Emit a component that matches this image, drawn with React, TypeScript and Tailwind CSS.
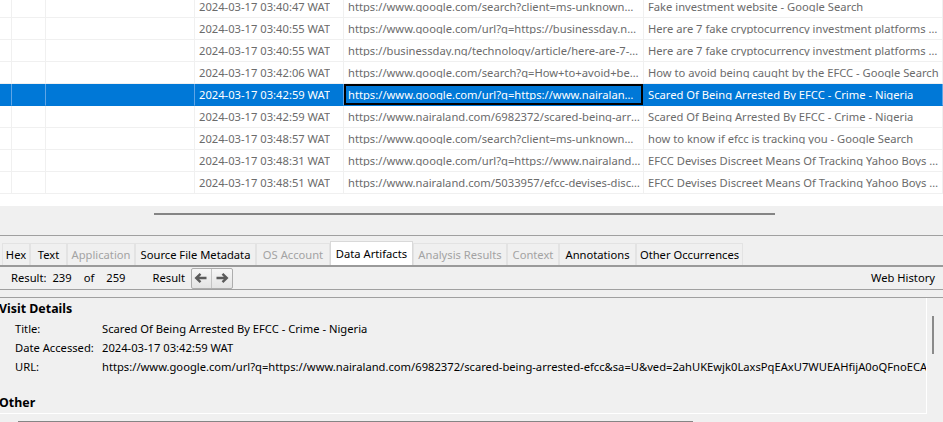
import React from "react";

type Row = { date: string; url: string; title: string };

const ROWS: Row[] = [
  {
    date: "2024-03-17 03:40:47 WAT",
    url: "https://www.google.com/search?client=ms-unknown&q=Fake+investment+website",
    title: "Fake investment website - Google Search",
  },
  {
    date: "2024-03-17 03:40:55 WAT",
    url: "https://www.google.com/url?q=https://businessday.ng/technology/article/here-are-7",
    title: "Here are 7 fake cryptocurrency investment platforms operating in Nigeria",
  },
  {
    date: "2024-03-17 03:40:55 WAT",
    url: "https://businessday.ng/technology/article/here-are-7-fake-cryptocurrency",
    title: "Here are 7 fake cryptocurrency investment platforms operating in Nigeria",
  },
  {
    date: "2024-03-17 03:42:06 WAT",
    url: "https://www.google.com/search?q=How+to+avoid+being+caught+by+the+EFCC",
    title: "How to avoid being caught by the EFCC - Google Search",
  },
  {
    date: "2024-03-17 03:42:59 WAT",
    url: "https://www.google.com/url?q=https://www.nairaland.com/6982372/scared-being-arrested-efcc",
    title: "Scared Of Being Arrested By EFCC - Crime - Nigeria",
  },
  {
    date: "2024-03-17 03:42:59 WAT",
    url: "https://www.nairaland.com/6982372/scared-being-arrested-efcc",
    title: "Scared Of Being Arrested By EFCC - Crime - Nigeria",
  },
  {
    date: "2024-03-17 03:48:57 WAT",
    url: "https://www.google.com/search?client=ms-unknown&q=how+to+know+if+efcc",
    title: "how to know if efcc is tracking you - Google Search",
  },
  {
    date: "2024-03-17 03:48:31 WAT",
    url: "https://www.google.com/url?q=https://www.nairaland.com/5033957/efcc-devises",
    title: "EFCC Devises Discreet Means Of Tracking Yahoo Boys - Crime - Nigeria",
  },
  {
    date: "2024-03-17 03:48:51 WAT",
    url: "https://www.nairaland.com/5033957/efcc-devises-discreet-means-tracking",
    title: "EFCC Devises Discreet Means Of Tracking Yahoo Boys - Crime - Nigeria",
  },
];

const TABS: { label: string; w: string; disabled?: boolean; active?: boolean }[] = [
  { label: "Hex", w: "w-[28px]" },
  { label: "Text", w: "w-[37px]" },
  { label: "Application", w: "w-[68px]", disabled: true },
  { label: "Source File Metadata", w: "w-[121px]" },
  { label: "OS Account", w: "w-[74px]", disabled: true },
  { label: "Data Artifacts", w: "w-[83px]", active: true },
  { label: "Analysis Results", w: "w-[94px]", disabled: true },
  { label: "Context", w: "w-[52px]", disabled: true },
  { label: "Annotations", w: "w-[77px]" },
  { label: "Other Occurrences", w: "w-[107px]" },
];

function TableRow({ row, selected }: { row: Row; selected: boolean }) {
  const cell = selected
    ? "h-[22px] min-w-0 border-r border-b border-r-[#5fa5e6] border-b-[#0078d7] bg-[#0078d7] text-white"
    : "h-[22px] min-w-0 border-r border-b border-[#f0f0f0] text-[#6b6b6b]";
  return (
    <div className="grid grid-cols-[12px_34px_149px_149px_300px_minmax(0,1fr)]">
      <div className={cell} />
      <div className={cell} />
      <div className={cell} />
      <div className={`${cell} flex items-center pl-[4px]`}>
        <span className="truncate">{row.date}</span>
      </div>
      {selected ? (
        <div className="flex h-[22px] min-w-0 items-center border-b border-b-[#0078d7] bg-[#0078d7] pr-[1px]">
          <div className="flex h-[21px] w-full min-w-0 items-center border-2 border-black pl-[2px] pr-[2px] text-white">
            <span className="truncate">{row.url}</span>
          </div>
        </div>
      ) : (
        <div className={`${cell} flex items-center pl-[4px] pr-[2px]`}>
          <span className="truncate">{row.url}</span>
        </div>
      )}
      <div className={`${cell} flex items-center pl-[4px] pr-[2px]`}>
        <span className="truncate">{row.title}</span>
      </div>
    </div>
  );
}

function NavButtons() {
  return (
    <div className="ml-[6px] flex h-[21px] items-stretch rounded-[2px] border border-[#adadad] bg-gradient-to-b from-[#f6f6f6] to-[#e4e4e4]">
      <div className="flex w-[20px] items-center justify-center border-r border-[#c4c4c4]">
        <svg width="14" height="12" viewBox="0 0 14 12">
          <path d="M12.5 6H2.5M6.5 1.8 2.2 6l4.3 4.2" fill="none" stroke="#5b5b5b" strokeWidth="2.4" />
        </svg>
      </div>
      <div className="flex w-[20px] items-center justify-center">
        <svg width="14" height="12" viewBox="0 0 14 12">
          <path d="M1.5 6h10M7.5 1.8 11.8 6l-4.3 4.2" fill="none" stroke="#5b5b5b" strokeWidth="2.4" />
        </svg>
      </div>
    </div>
  );
}

export default function App() {
  return (
    <div className="h-[422px] w-[943px] overflow-hidden bg-[#f0f0f0] font-['Noto_Sans','Segoe_UI',sans-serif] text-[11.2px] leading-none text-black">
      {/* results table */}
      <div className="h-[206px] overflow-hidden bg-white">
        <div className="-mt-[4px]">
          {ROWS.map((row, i) => (
            <TableRow key={i} row={row} selected={i === 4} />
          ))}
        </div>
      </div>

      {/* horizontal scrollbar of the table */}
      <div className="ml-[154px] mt-[7px] h-[2px] w-[621px] bg-[#858585]" />

      <div className="mt-[20px] h-px bg-[#a0a0a0]" />

      {/* viewer tabs */}
      <div className="flex h-[29px] items-end pl-[2px]">
        {TABS.map((t) => (
          <div
            key={t.label}
            className={`flex shrink-0 items-center justify-center whitespace-nowrap border border-b-0 ${t.w} ${
              t.active
                ? "h-[24px] border-[#d9d9d9] bg-white text-black"
                : "h-[22px] border-[#e3e3e3] bg-[#f0f0f0]"
            } ${t.disabled ? "text-[#a3a3a3]" : "text-black"}`}
          >
            {t.label}
          </div>
        ))}
      </div>
      <div className="h-[2px] bg-[#9a9a9a]" />

      {/* result toolbar */}
      <div className="flex h-[22px] items-center pl-[11px] pr-[8px]">
        <span>Result:</span>
        <span className="ml-[6px]">239</span>
        <span className="ml-[12px]">of</span>
        <span className="ml-[12px]">259</span>
        <span className="ml-[27px]">Result</span>
        <NavButtons />
        <span className="ml-auto">Web History</span>
      </div>
      <div className="h-px bg-[#a0a0a0]" />
      <div className="mt-[7px] h-px bg-[#a0a0a0]" />

      {/* details panel */}
      <div className="flex h-[116px]">
        <div className="h-[116px] w-[927px] min-w-0 border-b border-r border-white">
          <div className="-ml-[1px] flex h-[21px] items-center pt-[1px] text-[12.4px] font-bold">Visit Details</div>
          <div className="grid grid-cols-[87px_minmax(0,1fr)] pl-[15px]">
            {[
              ["Title:", "Scared Of Being Arrested By EFCC - Crime - Nigeria"],
              ["Date Accessed:", "2024-03-17 03:42:59 WAT"],
              [
                "URL:",
                "https://www.google.com/url?q=https://www.nairaland.com/6982372/scared-being-arrested-efcc&sa=U&ved=2ahUKEwjk0LaxsPqEAxU7WUEAHfijA0oQFnoECAYQAg",
              ],
            ].map(([k, v]) => (
              <React.Fragment key={k}>
                <div className="flex h-[19px] items-center whitespace-nowrap">{k}</div>
                <div className="flex h-[19px] min-w-0 items-center overflow-hidden whitespace-nowrap">{v}</div>
              </React.Fragment>
            ))}
          </div>
          <div className="-ml-[1px] mt-[17px] flex h-[20px] items-center text-[12.4px] font-bold">Other</div>
        </div>
        <div className="flex-1 pl-[5px] pt-[18px]">
          <div className="h-[38px] w-[2px] bg-[#8a8a8a]" />
        </div>
      </div>

      <div className="ml-[18px] mt-[7px] h-[2px] w-[675px] bg-[#858585]" />
    </div>
  );
}
